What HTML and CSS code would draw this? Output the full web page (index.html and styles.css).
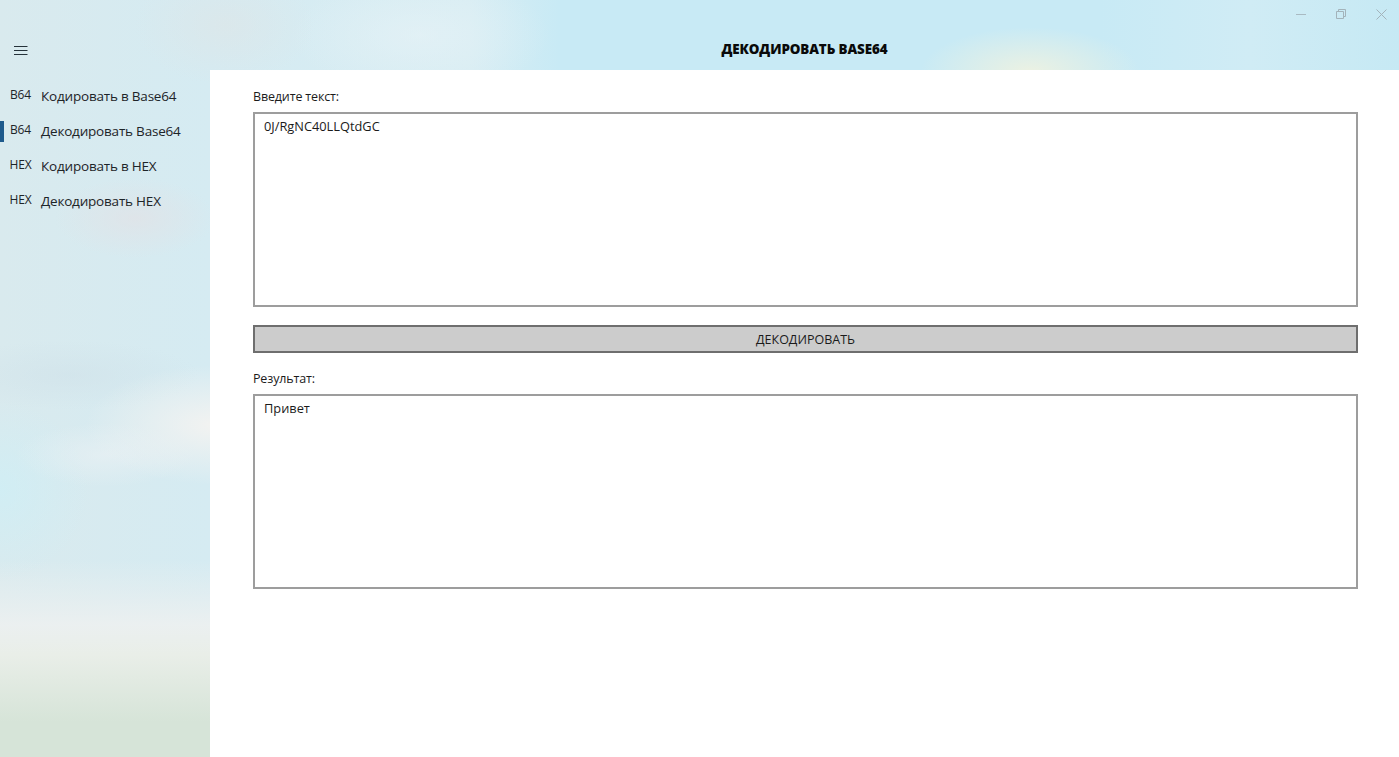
FILE: index.html
```html
<!DOCTYPE html>
<html lang="ru">
<head>
<meta charset="utf-8">
<title>Декодировать Base64</title>
<link rel="stylesheet" href="styles.css">
</head>
<body>
<div class="app">
  <header class="titlebar">
    <div class="burger-cell">
      <svg class="burger" width="16" height="12" viewBox="0 0 16 12"><path d="M1 1.5h13.5M1 5.5h13.5M1 9.5h13.5" stroke="#25323a" stroke-width="1" fill="none"/></svg>
    </div>
    <h1 class="page-title">ДЕКОДИРОВАТЬ BASE64</h1>
    <div class="win-controls">
      <svg width="10" height="10" viewBox="0 0 10 10"><path d="M0 5.5h10" stroke="#a9bac2" stroke-width="1"/></svg>
      <svg width="10" height="10" viewBox="0 0 10 10"><path d="M.5 2.5h7v7h-7zM2.5 2.5v-2h7v7h-2" stroke="#a3b3ba" stroke-width="1" fill="none"/></svg>
      <svg width="11" height="11" viewBox="0 0 11 11"><path d="M.5.5l10 10M10.5.5l-10 10" stroke="#a3b3ba" stroke-width="1" fill="none"/></svg>
    </div>
  </header>
  <div class="content">
    <nav class="sidebar">
      <div class="nav-item"><span class="nav-icon">B64</span><span class="nav-label">Кодировать в Base64</span></div>
      <div class="nav-item active"><span class="nav-icon">B64</span><span class="nav-label">Декодировать Base64</span></div>
      <div class="nav-item"><span class="nav-icon">HEX</span><span class="nav-label">Кодировать в HEX</span></div>
      <div class="nav-item"><span class="nav-icon">HEX</span><span class="nav-label">Декодировать HEX</span></div>
    </nav>
    <main class="main">
      <label class="field-label">Введите текст:</label>
      <div class="textbox">0J/RgNC40LLQtdGC</div>
      <button class="action" type="button">ДЕКОДИРОВАТЬ</button>
      <label class="field-label">Результат:</label>
      <div class="textbox">Привет</div>
    </main>
  </div>
</div>
</body>
</html>
```
FILE: styles.css
```css
* { box-sizing: border-box; }
html, body { margin: 0; height: 100%; }
body {
  font-family: "Open Sans", "Noto Sans", sans-serif;
  color: #1b1b1b;
  overflow: hidden;
}
.app {
  width: 1399px;
  height: 757px;
  display: flex;
  flex-direction: column;
  background:
    radial-gradient(ellipse 110px 45px at 1030px 72px, rgba(248,244,220,.75), rgba(248,244,220,0)),
    radial-gradient(ellipse 130px 60px at 215px 425px, rgba(244,243,241,.95), rgba(244,243,241,0)),
    radial-gradient(ellipse 90px 32px at 105px 455px, rgba(234,241,244,.65), rgba(234,241,244,0)),
    radial-gradient(ellipse 90px 90px at 0 490px, rgba(203,240,248,.6), rgba(203,240,248,0)),
    radial-gradient(ellipse 80px 40px at 135px 218px, rgba(226,226,230,.7), rgba(226,226,230,0)),
    radial-gradient(ellipse 130px 35px at 70px 375px, rgba(206,224,232,.5), rgba(206,224,232,0)),
    radial-gradient(ellipse 90px 60px at 225px 25px, rgba(224,228,228,.5), rgba(224,228,228,0)),
    radial-gradient(ellipse 130px 60px at 420px 35px, rgba(232,243,247,.6), rgba(232,243,247,0)),
    linear-gradient(180deg, rgba(236,240,241,0) 560px, rgba(236,240,240,.95) 625px, #e9eee8 655px, #d6e4d8 722px, #d6e4d8 757px),
    linear-gradient(90deg, #d9eaee 0, #d5ebf2 210px, #d8edf3 470px, #c8eaf5 560px, #c8eaf5 1100px, #d0ecf5 1250px, #c6e9f4 1399px);
}
.titlebar {
  height: 70px;
  flex: none;
  display: grid;
  grid-template-columns: 210px 1fr;
  position: relative;
}
.burger-cell {
  display: flex;
  align-items: center;
  padding: 31px 0 0 13px;
}
.page-title {
  margin: 0;
  padding-top: 40px;
  font-size: 13.4px;
  line-height: 19px;
  font-weight: 800;
  text-align: center;
  color: #0a0a0a;
  letter-spacing: -.1px;
}
.win-controls {
  position: absolute;
  top: 9px;
  right: 12px;
  display: flex;
  gap: 30px;
  align-items: flex-start;
}
.content { flex: 1; display: flex; min-height: 0; }
.sidebar { width: 210px; flex: none; padding-top: 8px; }
.nav-item {
  height: 35px;
  display: flex;
  align-items: center;
  position: relative;
  font-size: 13.5px;
  color: #1d2428;
}
.nav-item.active::before {
  content: "";
  position: absolute;
  left: 0;
  top: 8px;
  width: 4px;
  height: 21px;
  background: #1e5a8c;
}
.nav-icon {
  width: 41px;
  flex: none;
  text-align: center;
  font-size: 12px;
  letter-spacing: -.1px;
  margin-top: -2px;
}
.nav-label { white-space: nowrap; letter-spacing: -.2px; }
.main {
  flex: 1;
  background: #fff;
  padding: 18px 41px 0 43px;
  display: flex;
  flex-direction: column;
}
.field-label {
  font-size: 12.5px;
  line-height: 18px;
  letter-spacing: -.15px;
  color: #1b1b1b;
  margin-bottom: 6px;
}
.textbox {
  height: 195px;
  flex: none;
  border: 2px solid #9d9d9d;
  padding: 3px 9px;
  font-size: 12.8px;
  line-height: 18px;
}
.action {
  height: 28px;
  flex: none;
  margin: 18px 0 17px;
  background: #cccccc;
  border: 2px solid #6e6e6e;
  font: inherit;
  font-size: 12.5px;
  color: #1b1b1b;
  padding: 0;
}
```
